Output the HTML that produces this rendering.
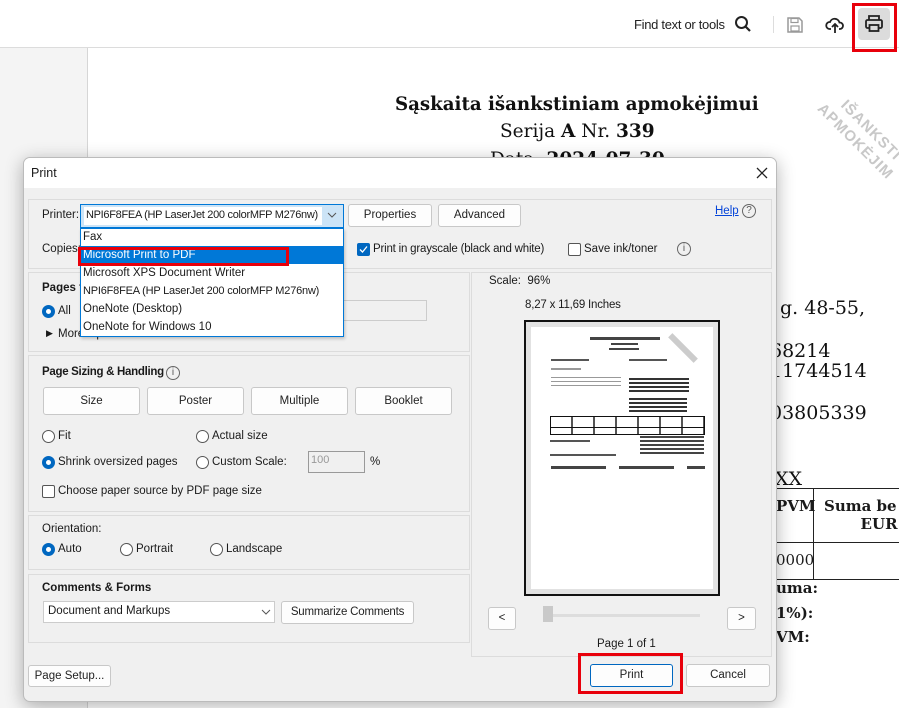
<!DOCTYPE html>
<html><head><meta charset="utf-8"><style>
*{box-sizing:border-box;margin:0;padding:0}
body{width:899px;height:708px;overflow:hidden;position:relative;background:#fff;font-family:"Liberation Sans","DejaVu Sans",sans-serif;font-size:11.5px;color:#1a1a1a}
.a{position:absolute;white-space:nowrap}
.serif{font-family:"DejaVu Serif","Liberation Serif",serif}
.btn{position:absolute;background:#fdfdfd;border:1px solid #c8c8c8;border-radius:3px;text-align:center;font-size:11.5px;color:#222}
.grp{position:absolute;border:1px solid #dcdcdc;background:#f0f0f0}
.rad{position:absolute;width:13px;height:13px;border:1px solid #555;border-radius:50%;background:#fff}
.rad.on{border:4px solid #0067c0}
.chk{position:absolute;width:13px;height:13px;border:1px solid #555;border-radius:2px;background:#fff}
</style></head><body>
<div class="a" style="left:0;top:48px;width:88px;height:660px;background:#f4f4f4;border-right:1px solid #d6d6d6"></div>
<div class="a" style="left:0;top:0;width:899px;height:48px;background:#fff;border-bottom:1px solid #dcdcdc"></div>
<div class="a" style="left:634px;top:17px;font-size:13px;color:#222;letter-spacing:-0.3px">Find text or tools</div>
<svg class="a" style="left:734px;top:15px" width="18" height="18" viewBox="0 0 18 18"><circle cx="7.5" cy="7.5" r="5.5" fill="none" stroke="#222" stroke-width="2"/><path d="M11.5 11.5L16 16" stroke="#222" stroke-width="2.2"/></svg>
<div class="a" style="left:773px;top:16px;width:1px;height:17px;background:#ddd"></div>
<svg class="a" style="left:786px;top:16px" width="18" height="18" viewBox="0 0 18 18"><path d="M2 2h11l3 3v11H2z" fill="none" stroke="#999" stroke-width="1.5"/><rect x="5" y="2.5" width="7" height="4" fill="none" stroke="#999" stroke-width="1.2"/><rect x="5" y="10" width="8" height="5" fill="none" stroke="#999" stroke-width="1.2"/></svg>
<svg class="a" style="left:825px;top:15px" width="20" height="20" viewBox="0 0 20 20"><path d="M6 14H4.5A3.5 3.5 0 0 1 5 7a5 5 0 0 1 9.5 0.5A3.2 3.2 0 0 1 15 14h-1" fill="none" stroke="#222" stroke-width="1.8"/><path d="M10 18V9M7 12l3-3 3 3" fill="none" stroke="#222" stroke-width="1.8"/></svg>
<div class="a" style="left:858px;top:8px;width:32px;height:32px;background:#dcdcdc;border-radius:4px"></div>
<svg class="a" style="left:864px;top:14px" width="20" height="20" viewBox="0 0 20 20"><path d="M5 6V2h10v4" fill="none" stroke="#222" stroke-width="1.8"/><rect x="2" y="6" width="16" height="8" rx="1.5" fill="none" stroke="#222" stroke-width="1.8"/><rect x="5.5" y="11" width="9" height="6" fill="#dcdcdc" stroke="#222" stroke-width="1.8"/></svg>
<div class="a" style="left:852px;top:3px;width:45px;height:49px;border:3px solid #e8000b"></div>

<div class="a serif" style="left:395px;top:94px;font-size:18.2px;font-weight:bold;color:#111">Sąskaita išankstiniam apmokėjimui</div>
<div class="a serif" style="left:500px;top:121px;font-size:18.5px;color:#111">Serija <b>A</b> Nr. <b>339</b></div>
<div class="a serif" style="left:490px;top:149px;font-size:18.5px;color:#111">Data: <b>2024-07-30</b></div>
<div class="a" style="left:850px;top:96px;font-size:15px;font-weight:bold;color:#c8c8c8;transform:rotate(45deg);transform-origin:0 0;line-height:19px;letter-spacing:1px">IŠANKSTI<br><span style="margin-left:-14px">APMOKĖJIM</span></div>
<div class="a serif" style="left:780px;top:297px;font-size:19px;color:#111">g. 48-55,</div>
<div class="a serif" style="left:770px;top:340px;font-size:19px;color:#111">68214</div>
<div class="a serif" style="left:770px;top:360px;font-size:19px;color:#111">11744514</div>
<div class="a serif" style="left:770px;top:402px;font-size:19px;color:#111">03805339</div>
<div class="a serif" style="left:775px;top:468px;font-size:19px;color:#111">XX</div>
<div class="a" style="left:777px;top:488px;width:122px;height:1px;background:#222"></div>
<div class="a" style="left:777px;top:542px;width:122px;height:1px;background:#222"></div>
<div class="a" style="left:777px;top:579px;width:122px;height:1px;background:#222"></div>
<div class="a" style="left:813px;top:488px;width:1px;height:91px;background:#222"></div>
<div class="a serif" style="left:776px;top:497px;font-size:15px;font-weight:bold">PVM</div>
<div class="a serif" style="left:824px;top:497px;font-size:15px;font-weight:bold;line-height:18px">Suma be<br>&nbsp;&nbsp;&nbsp;&nbsp;&nbsp;&nbsp;&nbsp;EUR</div>
<div class="a serif" style="left:776px;top:551px;font-size:15px">0000</div>
<div class="a serif" style="left:776px;top:579px;font-size:15px;font-weight:bold">uma:</div>
<div class="a serif" style="left:776px;top:604px;font-size:15px;font-weight:bold">1%):</div>
<div class="a serif" style="left:776px;top:628px;font-size:15px;font-weight:bold">VM:</div>

<div class="a" style="left:23px;top:157px;width:754px;height:545px;background:#f0f0f0;border:1px solid #bbb;border-radius:7px;box-shadow:0 4px 18px rgba(0,0,0,.3);overflow:hidden">
 <div style="height:30px;background:#fff"></div>
</div>
<div class="a" style="left:31px;top:166px;font-size:12.5px">Print</div>
<svg class="a" style="left:756px;top:167px" width="12" height="12" viewBox="0 0 12 12"><path d="M1 1L11 11M11 1L1 11" stroke="#222" stroke-width="1.3"/></svg>

<div class="grp" style="left:28px;top:199px;width:744px;height:70px"></div>
<div class="a" style="left:42px;top:209px">Printer:</div>
<div class="a" style="left:80px;top:204px;width:264px;height:24px;background:#cce4f7;border:1px solid #0078d7"></div>
<div class="a" style="left:84px;top:207px;width:238px;height:18px;background:#fff"></div>
<div class="a" style="left:86px;top:209px;font-size:11px;letter-spacing:-0.3px">NPI6F8FEA (HP LaserJet 200 colorMFP M276nw)</div>
<svg class="a" style="left:327px;top:212px" width="10" height="6" viewBox="0 0 10 6"><path d="M1 1l4 4 4-4" fill="none" stroke="#555"/></svg>
<div class="btn" style="left:348px;top:204px;width:84px;height:23px;line-height:21px">Properties</div>
<div class="btn" style="left:438px;top:204px;width:83px;height:23px;line-height:21px">Advanced</div>
<div class="a" style="left:715px;top:205px;color:#0645d9;text-decoration:underline">Help</div>
<div class="a" style="left:742px;top:204px;width:14px;height:14px;border:1px solid #666;border-radius:50%;font-size:10px;text-align:center;line-height:12px;color:#555">?</div>
<div class="a" style="left:42px;top:243px">Copies:</div>
<div class="a" style="left:357px;top:243px;width:13px;height:13px;background:#0067c0;border-radius:2px"></div>
<svg class="a" style="left:359px;top:245px" width="9" height="9" viewBox="0 0 9 9"><path d="M1 4.5l2.5 2.5L8 1.5" fill="none" stroke="#fff" stroke-width="1.3"/></svg>
<div class="a" style="left:373px;top:243px;letter-spacing:-0.2px">Print in grayscale (black and white)</div>
<div class="chk" style="left:568px;top:243px"></div>
<div class="a" style="left:584px;top:243px">Save ink/toner</div>
<div class="a" style="left:677px;top:242px;width:14px;height:14px;border:1px solid #666;border-radius:50%;font-size:10px;text-align:center;line-height:12px;color:#555">i</div>

<div class="grp" style="left:28px;top:272px;width:442px;height:80px"></div>
<div class="a" style="left:42px;top:282px;font-weight:bold">Pages to Print</div>
<div class="rad on" style="left:42px;top:305px"></div>
<div class="a" style="left:58px;top:305px">All</div>
<div class="a" style="left:340px;top:300px;width:87px;height:21px;border:1px solid #ccc;background:#f0f0f0"></div>
<div class="a" style="left:46px;top:328px;font-size:9px">▶</div>
<div class="a" style="left:58px;top:328px">More Options</div>

<div class="grp" style="left:28px;top:355px;width:442px;height:157px"></div>
<div class="a" style="left:42px;top:366px;font-weight:bold;letter-spacing:-0.3px">Page Sizing &amp; Handling</div>
<div class="a" style="left:166px;top:366px;width:14px;height:14px;border:1px solid #666;border-radius:50%;font-size:10px;text-align:center;line-height:12px;color:#555;background:#f0f0f0">i</div>
<div class="btn" style="left:43px;top:387px;width:97px;height:28px;line-height:26px">Size</div>
<div class="btn" style="left:147px;top:387px;width:97px;height:28px;line-height:26px">Poster</div>
<div class="btn" style="left:251px;top:387px;width:97px;height:28px;line-height:26px">Multiple</div>
<div class="btn" style="left:355px;top:387px;width:97px;height:28px;line-height:26px">Booklet</div>
<div class="rad" style="left:42px;top:430px"></div><div class="a" style="left:58px;top:430px">Fit</div>
<div class="rad" style="left:196px;top:430px"></div><div class="a" style="left:212px;top:430px">Actual size</div>
<div class="rad on" style="left:42px;top:456px"></div><div class="a" style="left:58px;top:456px">Shrink oversized pages</div>
<div class="rad" style="left:196px;top:456px"></div><div class="a" style="left:212px;top:456px">Custom Scale:</div>
<div class="a" style="left:308px;top:451px;width:57px;height:22px;border:1px solid #999;background:#f0f0f0;color:#999;padding:2px 2px;font-size:11px">100</div>
<div class="a" style="left:370px;top:456px">%</div>
<div class="chk" style="left:42px;top:485px"></div><div class="a" style="left:58px;top:485px">Choose paper source by PDF page size</div>

<div class="grp" style="left:28px;top:515px;width:442px;height:55px"></div>
<div class="a" style="left:42px;top:523px">Orientation:</div>
<div class="rad on" style="left:42px;top:543px"></div><div class="a" style="left:58px;top:543px">Auto</div>
<div class="rad" style="left:120px;top:543px"></div><div class="a" style="left:136px;top:543px">Portrait</div>
<div class="rad" style="left:210px;top:543px"></div><div class="a" style="left:226px;top:543px">Landscape</div>

<div class="grp" style="left:28px;top:574px;width:442px;height:69px"></div>
<div class="a" style="left:42px;top:582px;font-weight:bold">Comments &amp; Forms</div>
<div class="a" style="left:43px;top:601px;width:232px;height:22px;border:1px solid #ccc;background:#fff"></div>
<div class="a" style="left:48px;top:605px">Document and Markups</div>
<svg class="a" style="left:261px;top:609px" width="10" height="6" viewBox="0 0 10 6"><path d="M1 1l4 4 4-4" fill="none" stroke="#555"/></svg>
<div class="btn" style="left:281px;top:601px;width:133px;height:23px;line-height:21px;letter-spacing:-0.2px">Summarize Comments</div>
<div class="btn" style="left:28px;top:665px;width:83px;height:22px;line-height:20px">Page Setup...</div>

<div class="grp" style="left:471px;top:272px;width:301px;height:385px"></div>
<div class="a" style="left:489px;top:275px">Scale:&nbsp; 96%</div>
<div class="a" style="left:525px;top:299px;letter-spacing:-0.2px">8,27 x 11,69 Inches</div>
<div class="a" style="left:524px;top:320px;width:196px;height:276px;border:2px solid #111;background:#e2e2e2"></div>
<div class="a" style="left:531px;top:327px;width:182px;height:262px;background:#fff"></div>
<div class="a" style="left:590px;top:337px;width:70px;height:3px;background:#444"></div>
<div class="a" style="left:611px;top:343px;width:27px;height:2px;background:#444"></div>
<div class="a" style="left:609px;top:348px;width:30px;height:2px;background:#444"></div>
<div class="a" style="left:680px;top:330px;width:6px;height:36px;background:#ccc;transform:rotate(-45deg)"></div>
<div class="a" style="left:551px;top:359px;width:38px;height:2px;background:#555"></div>
<div class="a" style="left:629px;top:359px;width:38px;height:2px;background:#555"></div>
<div class="a" style="left:551px;top:368px;width:30px;height:2px;background:#999"></div>
<div class="a" style="left:551px;top:377px;width:70px;height:12px;background:repeating-linear-gradient(#999 0 1px,#fff 1px 4px)"></div>
<div class="a" style="left:629px;top:378px;width:60px;height:14px;background:repeating-linear-gradient(#333 0 2px,#fff 2px 4px)"></div>
<div class="a" style="left:629px;top:398px;width:58px;height:16px;background:repeating-linear-gradient(#333 0 2px,#fff 2px 4px)"></div>
<div class="a" style="left:550px;top:416px;width:155px;height:19px;border:1px solid #111;background:repeating-linear-gradient(90deg,#fff 0 20px,#555 20px 22px)"></div>
<div class="a" style="left:550px;top:427px;width:155px;height:1px;background:#111"></div>
<div class="a" style="left:550px;top:440px;width:40px;height:2px;background:#555"></div>
<div class="a" style="left:640px;top:436px;width:64px;height:18px;background:repeating-linear-gradient(#444 0 2px,#fff 2px 4px)"></div>
<div class="a" style="left:550px;top:454px;width:66px;height:2px;background:#555"></div>
<div class="a" style="left:551px;top:466px;width:154px;height:3px;background:repeating-linear-gradient(90deg,#444 0 55px,#fff 55px 68px)"></div>
<div class="btn" style="left:488px;top:607px;width:28px;height:23px;line-height:21px">&lt;</div>
<div class="btn" style="left:727px;top:607px;width:29px;height:23px;line-height:21px">&gt;</div>
<div class="a" style="left:553px;top:614px;width:147px;height:3px;background:#ddd"></div>
<div class="a" style="left:543px;top:606px;width:10px;height:16px;background:#c9c9c9"></div>
<div class="a" style="left:597px;top:638px">Page 1 of 1</div>
<div class="btn" style="left:590px;top:664px;width:83px;height:23px;line-height:21px;border-color:#0067c0">Print</div>
<div class="a" style="left:578px;top:653px;width:105px;height:41px;border:3px solid #e8000b"></div>
<div class="btn" style="left:686px;top:664px;width:84px;height:23px;line-height:21px">Cancel</div>

<div class="a" style="left:80px;top:228px;width:264px;height:109px;background:#fff;border:1px solid #0078d7;box-shadow:1px 2px 3px rgba(0,0,0,.2)"></div>
<div class="a" style="left:81px;top:246px;width:262px;height:18px;background:#0078d7"></div>
<div class="a" style="left:83px;top:231px">Fax</div>
<div class="a" style="left:83px;top:249px;color:#fff">Microsoft Print to PDF</div>
<div class="a" style="left:83px;top:267px">Microsoft XPS Document Writer</div>
<div class="a" style="left:83px;top:285px;font-size:11px;letter-spacing:-0.2px">NPI6F8FEA (HP LaserJet 200 colorMFP M276nw)</div>
<div class="a" style="left:83px;top:303px">OneNote (Desktop)</div>
<div class="a" style="left:83px;top:321px">OneNote for Windows 10</div>
<div class="a" style="left:78px;top:247px;width:211px;height:19px;border:3px solid #e8000b"></div>
</body></html>
